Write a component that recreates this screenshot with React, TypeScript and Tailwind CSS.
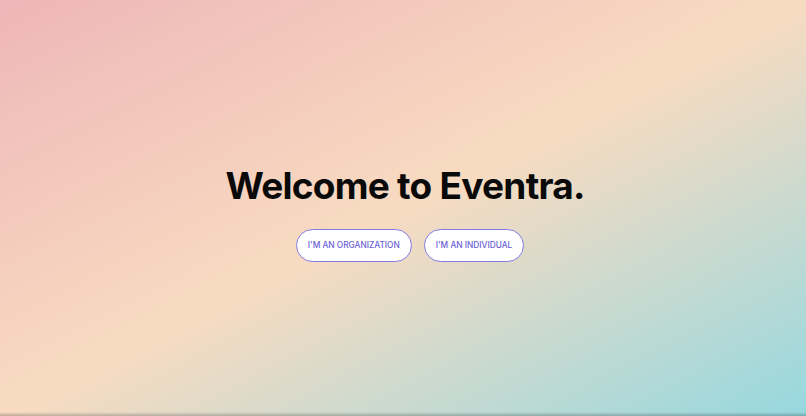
export default function App() {
  return (
    <div className="relative h-screen w-full overflow-hidden bg-[linear-gradient(to_bottom_right,#eeb6b8_0%,#f8dbc1_50%,#96d8df_100%)] font-['Inter',sans-serif]">
      <div className="flex h-full flex-col items-center justify-center pt-[12px]">
        <h1 className="ml-[4px] text-[37px] font-bold leading-none tracking-[-0.02em] text-[#0a0a0a]">
          Welcome to Eventra.
        </h1>
        <div className="mt-[25px] ml-[14px] flex gap-3">
          <button className="h-[33px] rounded-full border border-[#8378e2] bg-white px-[11px] text-[8.3px] font-medium uppercase text-[#6a62d6]">
            I'm an organization
          </button>
          <button className="h-[33px] rounded-full border border-[#8378e2] bg-white px-[11px] text-[8.3px] font-medium uppercase text-[#6a62d6]">
            I'm an individual
          </button>
        </div>
      </div>
      {/* shadow strip at the bottom edge */}
      <div className="pointer-events-none absolute inset-x-0 bottom-0 h-[4px] bg-[linear-gradient(to_bottom,rgba(0,0,0,0),rgba(0,0,0,0.22))]" />
    </div>
  );
}
